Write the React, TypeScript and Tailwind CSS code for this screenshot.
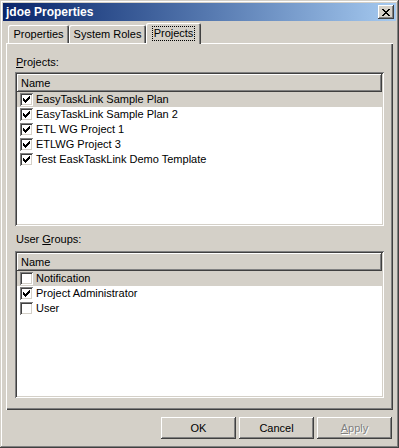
import React from 'react'

const raised =
  'shadow-[inset_-1px_-1px_#404040,inset_1px_1px_#fff,inset_-2px_-2px_#808080]'

function CheckMark() {
  return (
    <svg width="7" height="7" viewBox="0 0 7 7" shapeRendering="crispEdges" className="block">
      <path
        fill="#000"
        d="M6 0h1v3h-1zM5 1h1v3h-1zM4 2h1v3h-1zM3 3h1v3h-1zM2 4h1v3h-1zM1 3h1v3h-1zM0 2h1v3h-1z"
      />
    </svg>
  )
}

function CheckBox({ checked }: { checked: boolean }) {
  return (
    <div className="w-[13px] h-[13px] shrink-0 bg-white flex items-center justify-center shadow-[inset_1px_1px_#808080,inset_-1px_-1px_#fff,inset_2px_2px_#404040,inset_-2px_-2px_#d4d0c8]">
      {checked && <CheckMark />}
    </div>
  )
}

function ListBox({ items, height }: { items: { name: string; checked: boolean }[]; height: string }) {
  return (
    <div
      className={`bg-white p-[2px] flex flex-col shadow-[inset_1px_1px_#808080,inset_-1px_-1px_#fff,inset_2px_2px_#404040,inset_-2px_-2px_#d4d0c8] ${height}`}
    >
      <div className={`h-[18px] shrink-0 bg-[#d4d0c8] flex items-center pl-[4px] ${raised}`}>Name</div>
      {items.map((item, i) => (
        <div
          key={item.name}
          className={`h-[15px] flex items-center pl-[3px] gap-[3px] ${i === 0 ? 'bg-[#d4d0c8]' : ''}`}
        >
          <CheckBox checked={item.checked} />
          <span className="whitespace-nowrap">{item.name}</span>
        </div>
      ))}
    </div>
  )
}

function Button({ children, disabled }: { children: React.ReactNode; disabled?: boolean }) {
  return (
    <button
      className={`w-[75px] h-[22px] bg-[#d4d0c8] flex items-center justify-center shadow-[inset_-1px_-1px_#404040,inset_1px_1px_#fff,inset_-2px_-2px_#808080,inset_2px_2px_#d4d0c8] ${
        disabled ? 'text-[#808080] [text-shadow:1px_1px_0_#fff]' : 'text-black'
      }`}
    >
      {children}
    </button>
  )
}

const projects = [
  { name: 'EasyTaskLink Sample Plan', checked: true },
  { name: 'EasyTaskLink Sample Plan 2', checked: true },
  { name: 'ETL WG Project 1', checked: true },
  { name: 'ETLWG Project 3', checked: true },
  { name: 'Test EaskTaskLink Demo Template', checked: true },
]

const groups = [
  { name: 'Notification', checked: false },
  { name: 'Project Administrator', checked: true },
  { name: 'User', checked: false },
]

export default function App() {
  return (
    <div className="w-[399px] h-[448px] bg-[#d4d0c8] p-[3px] flex flex-col text-[11px] leading-none text-black font-['Liberation_Sans',Arial,sans-serif] shadow-[inset_-1px_-1px_#404040,inset_1px_1px_#d4d0c8,inset_-2px_-2px_#808080,inset_2px_2px_#fff]">
      {/* Title bar */}
      <div className="h-[18px] shrink-0 flex items-center justify-between pl-[3px] pr-[2px] bg-linear-to-r from-[#0a246a] to-[#a6caf0]">
        <span className="text-white font-bold text-[12px]">jdoe Properties</span>
        <div className={`w-[16px] h-[14px] bg-[#d4d0c8] flex items-center justify-center ${raised}`}>
          <svg width="8" height="7" viewBox="0 0 8 7" shapeRendering="crispEdges" className="block">
            <path
              fill="#000"
              d="M0 0h2v1h-2zM6 0h2v1h-2zM1 1h2v1h-2zM5 1h2v1h-2zM2 2h4v1h-4zM3 3h2v1h-2zM2 4h4v1h-4zM1 5h2v1h-2zM5 5h2v1h-2zM0 6h2v1h-2zM6 6h2v1h-2z"
            />
          </svg>
        </div>
      </div>

      <div className="flex-1 flex flex-col px-[3px]">
        {/* Tabs */}
        <div className="mt-[2px] h-[20px] shrink-0 flex items-end pl-[2px] relative z-10">
          <div className="w-[61px] h-[18px] flex items-center justify-center rounded-t-[2px] shadow-[inset_1px_1px_#fff,inset_-1px_0_#404040,inset_-2px_0_#808080]">
            Properties
          </div>
          <div className="w-[77px] h-[18px] flex items-center justify-center rounded-t-[2px] shadow-[inset_1px_1px_#fff,inset_-1px_0_#404040,inset_-2px_0_#808080]">
            System Roles
          </div>
          <div className="w-[55px] h-[21px] -mb-px bg-[#d4d0c8] flex items-center justify-center rounded-t-[2px] shadow-[inset_1px_1px_#fff,inset_-1px_0_#404040,inset_-2px_0_#808080]">
            <span className="border border-dotted border-black px-[1px] py-[1px]">Projects</span>
          </div>
        </div>

        {/* Panel */}
        <div className="h-[367px] shrink-0 flex flex-col px-[9px] pt-[11px] shadow-[inset_1px_1px_#fff,inset_-1px_-1px_#404040,inset_-2px_-2px_#808080]">
          <div className="h-[16px] leading-[16px] mb-[2px] pl-[1px]">
            <span className="underline underline-offset-1">P</span>rojects:
          </div>
          <ListBox items={projects} height="h-[154px]" />
          <div className="h-[16px] leading-[16px] mt-[5px] mb-[4px] pl-[1px]">
            User <span className="underline underline-offset-1">G</span>roups:
          </div>
          <ListBox items={groups} height="h-[147px]" />
        </div>

        {/* Buttons */}
        <div className="mt-[7px] flex justify-end gap-[3px] pr-[1px]">
          <Button>OK</Button>
          <Button>Cancel</Button>
          <Button disabled>
            <span>
              <span className="underline underline-offset-1">A</span>pply
            </span>
          </Button>
        </div>
      </div>
    </div>
  )
}
